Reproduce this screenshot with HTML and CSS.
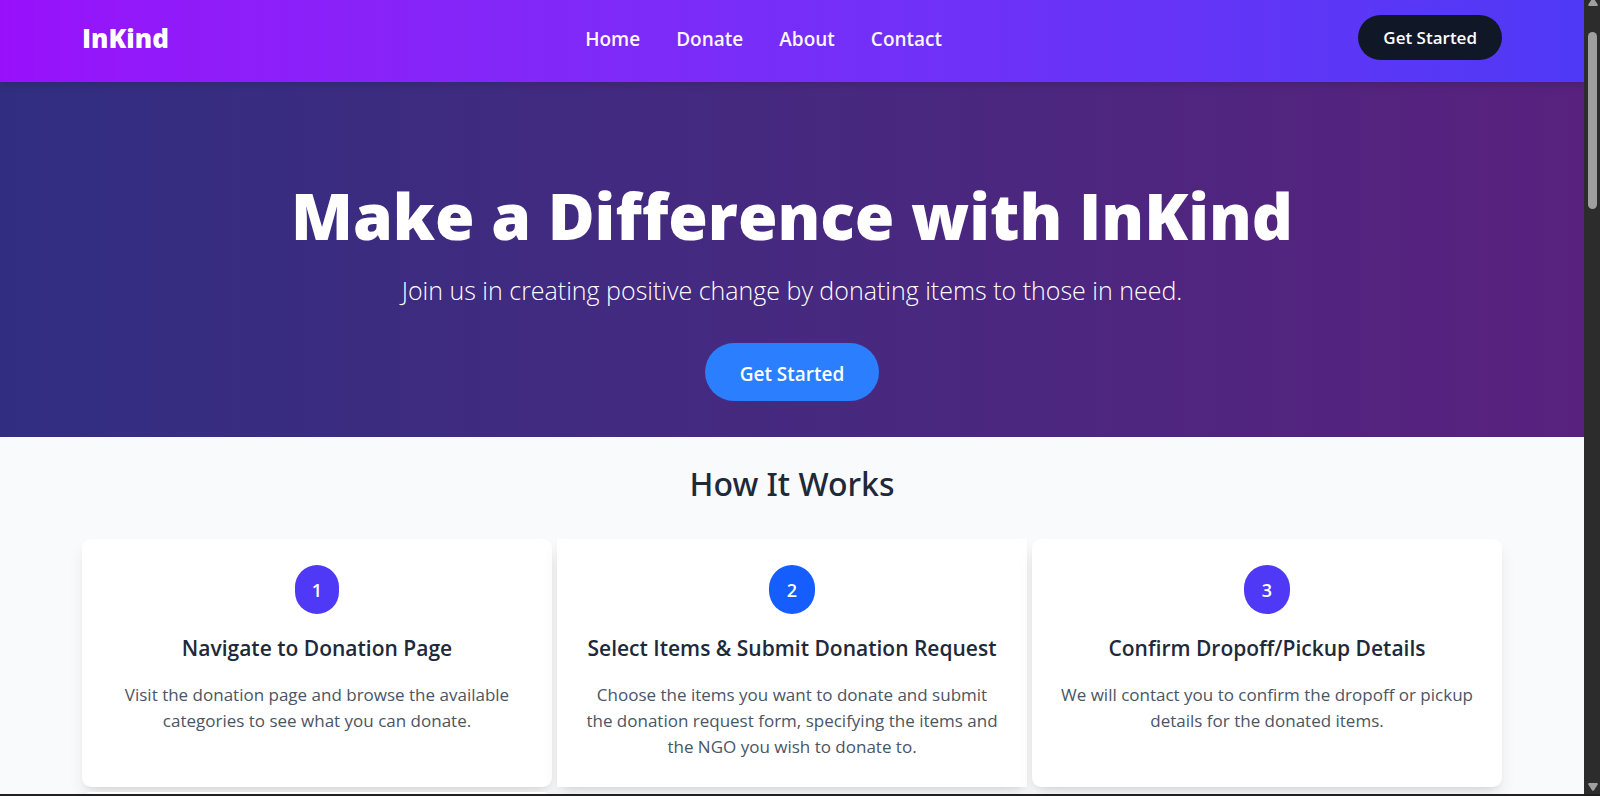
FILE: index.html
```html
<!DOCTYPE html>
<html lang="en">
<head>
<meta charset="utf-8">
<meta name="viewport" content="width=device-width, initial-scale=1">
<title>InKind</title>
<link rel="stylesheet" href="styles.css">
</head>
<body>
<div class="window">
  <div class="page">
    <header class="header">
      <a class="logo" href="#">InKind</a>
      <nav class="nav">
        <a href="#">Home</a>
        <a href="#">Donate</a>
        <a href="#">About</a>
        <a href="#">Contact</a>
      </nav>
      <button class="header-button" type="button">Get Started</button>
    </header>
    <main>
      <section class="hero">
        <h1 class="hero-title">Make a Difference with InKind</h1>
        <p class="hero-text">Join us in creating positive change by donating items to those in need.</p>
        <button class="hero-button" type="button">Get Started</button>
      </section>
      <section class="steps">
        <h2 class="steps-title">How It Works</h2>
        <div class="cards">
          <article class="card card-rounded">
            <span class="badge badge-narrow">1</span>
            <h3 class="card-title">Navigate to Donation Page</h3>
            <p class="card-text">Visit the donation page and browse the available categories to see what you can donate.</p>
          </article>
          <article class="card">
            <span class="badge badge-blue">2</span>
            <h3 class="card-title">Select Items &amp; Submit Donation Request</h3>
            <p class="card-text">Choose the items you want to donate and submit the donation request form, specifying the items and the NGO you wish to donate to.</p>
          </article>
          <article class="card card-rounded">
            <span class="badge">3</span>
            <h3 class="card-title">Confirm Dropoff/Pickup Details</h3>
            <p class="card-text">We will contact you to confirm the dropoff or pickup details for the donated items.</p>
          </article>
          <article class="card card-rounded"></article>
        </div>
      </section>
    </main>
  </div>
  <div class="scrollbar" aria-hidden="true">
    <svg class="arrow" viewBox="0 0 10 8"><path d="M4 -1.200Q5-2.500 6 -1.200L9.700 4.500Q10 6 9 6H1Q0 6 0.300 4.500Z"/></svg>
    <div class="track"><div class="thumb"></div></div>
    <svg class="arrow" viewBox="0 0 10 8"><path d="M4 7.200Q5 8.500 6 7.200L9.700 1.500Q10 0 9 0H1Q0 0 0.300 1.500Z"/></svg>
  </div>
</div>
</body>
</html>
```
FILE: styles.css
```css
* { box-sizing: border-box; }

body {
  margin: 0;
  font-family: "Open Sans", "Noto Sans", sans-serif;
  background: #f9fafb;
}

h1, h2, h3, p { margin: 0; }

button {
  border: 0;
  font-family: inherit;
  cursor: pointer;
}

.window {
  display: flex;
  height: 100vh;
  overflow: hidden;
  border-bottom: 2px solid #202020;
}

.page {
  flex: 1;
  min-width: 0;
  overflow: hidden;
}

.header {
  position: relative;
  z-index: 1;
  display: flex;
  justify-content: space-between;
  align-items: flex-start;
  padding: 15px 82px 22px;
  background: linear-gradient(to right in oklab, #9810fa, #4f39f6);
  box-shadow: 0 4px 6px rgba(0, 0, 0, 0.1);
}

.logo {
  padding-top: 3px;
  font-size: 26px;
  font-weight: 800;
  line-height: 40px;
  color: #fff;
  text-decoration: none;
}

.nav {
  display: flex;
  gap: 36px;
  padding-top: 8px;
}

.nav a {
  font-size: 19px;
  font-weight: 600;
  line-height: 32px;
  color: #faf5ff;
  text-decoration: none;
}

.header-button {
  padding: 10px 25px;
  border-radius: 23px;
  background: #101828;
  color: #fff;
  font-size: 17px;
  font-weight: 600;
  line-height: 25px;
}

.hero {
  padding: 94px 24px 36px;
  text-align: center;
  color: #fff;
  background: linear-gradient(to right in oklab, #312e81, #58217e);
}

.hero-title {
  font-size: 64px;
  font-weight: 800;
  line-height: 80px;
}

.hero-text {
  margin-top: 14px;
  font-size: 25px;
  font-weight: 300;
  line-height: 40px;
  color: #fff;
}

.hero-button {
  margin-top: 33px;
  padding: 16px 35px 12px;
  border-radius: 29px;
  background: #2b7fff;
  color: #fff;
  font-size: 19px;
  font-weight: 600;
  line-height: 30px;
}

.steps {
  padding: 20px 82px;
}

.steps-title {
  font-family: "Noto Sans", "Open Sans", sans-serif;
  font-size: 32px;
  font-weight: 500;
  line-height: 54px;
  text-align: center;
  color: #1e2939;
}

.cards {
  display: grid;
  grid-template-columns: repeat(3, 1fr);
  gap: 5px;
  margin-top: 28px;
}

.card {
  min-height: 248px;
  padding: 26px;
  text-align: center;
  background: #fff;
  box-shadow: 0 10px 17px -3px rgba(0, 0, 0, 0.1), 0 4px 7px -4px rgba(0, 0, 0, 0.1);
}

.card-rounded { border-radius: 9px; }

.badge {
  display: inline-block;
  width: 46px;
  padding: 11px 0 9px;
  border-radius: 23px;
  background: #4f39f6;
  color: #fff;
  font-size: 18px;
  font-weight: 600;
  line-height: 29px;
}

.badge-narrow { width: 44px; }

.badge-blue { background: #155dfc; }

.card-title {
  margin-top: 18px;
  font-size: 21px;
  font-weight: 600;
  line-height: 32px;
  color: #1e2939;
}

.card-text {
  margin-top: 18px;
  font-size: 17px;
  line-height: 26px;
  color: #4a5565;
}

.scrollbar {
  display: flex;
  flex-direction: column;
  align-items: center;
  flex: 0 0 16px;
  padding: 0 0 3px 1px;
  background: #2c2c2c;
}

.arrow {
  width: 10px;
  height: 8px;
  fill: #9f9f9f;
}

.track {
  flex: 1;
  padding-top: 24px;
}

.thumb {
  width: 9px;
  height: 177px;
  border-radius: 5px;
  background: #9f9f9f;
}
```
